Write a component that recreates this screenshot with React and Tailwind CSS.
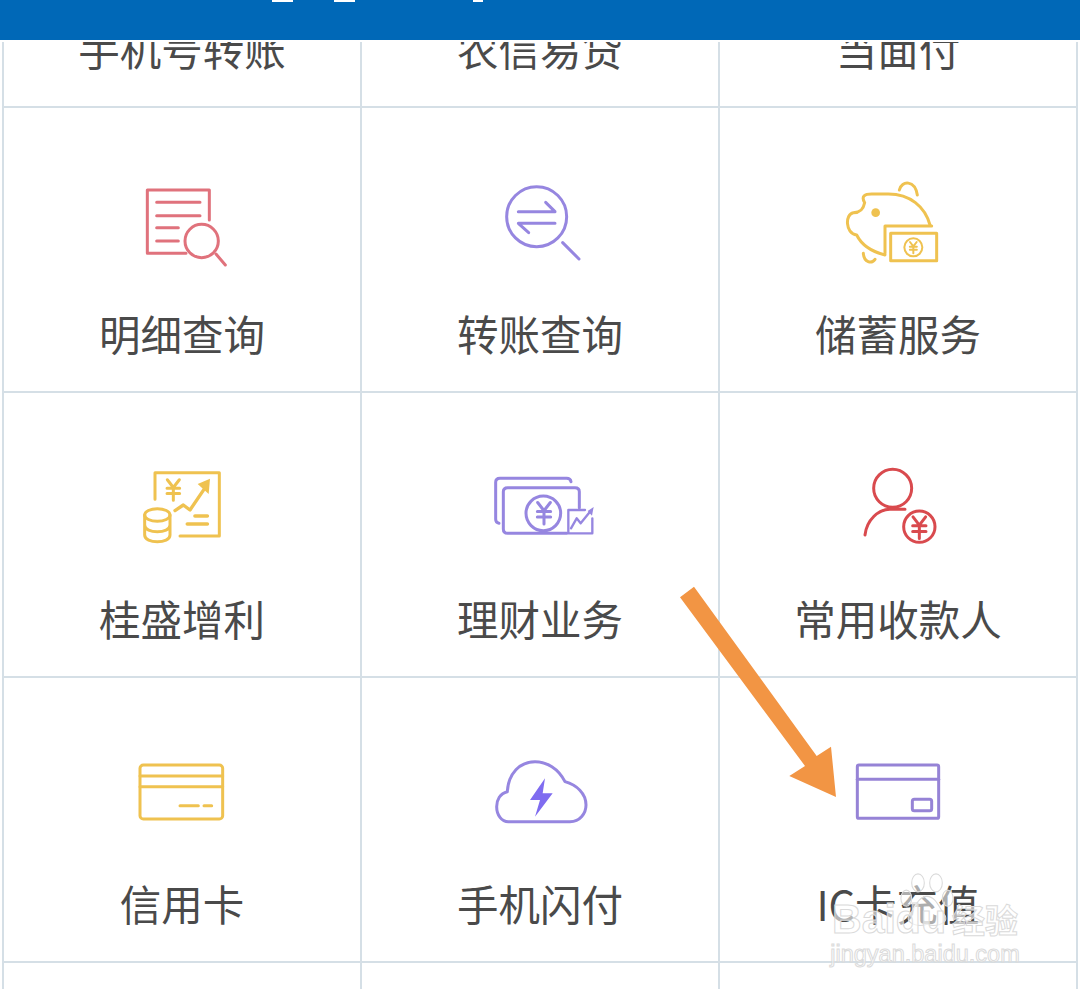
import React from 'react';

const Icon = ({ box, children }) => (
  <svg
    viewBox={box}
    fill="none"
    strokeLinecap="round"
    strokeLinejoin="round"
    className="w-[130px] h-[110px] shrink-0"
  >
    {children}
  </svg>
);

const Yen = ({ x, y, s = 1, w = 5 }) => (
  <g transform={`translate(${x} ${y}) scale(${s})`} strokeWidth={w / s}>
    <path d="M-20 -32 L0 -6 L20 -32 M-21 -4 H21 M-21 14 H21 M0 -6 V36" />
  </g>
);

const DetailIcon = () => (
  <Icon box="-9 0 390 330">
    <g stroke="#e0727c" strokeWidth="9">
      <path d="M198 250 H82 V60 H268 V150" />
      <path d="M110 97 H240 M110 137 H240 M110 173 H175 M110 213 H175" />
      <circle cx="245" cy="213" r="50" />
      <path d="M288 252 L316 285" />
    </g>
  </Icon>
);

const TransferIcon = () => (
  <Icon box="-15 0 390 330">
    <g stroke="#9686e0" strokeWidth="9">
      <circle cx="170" cy="140" r="90" />
      <path d="M115 125 H225 L197 97 M225 160 H115 L146 188" />
      <path d="M248 218 L297 267" />
    </g>
  </Icon>
);

const PigIcon = () => (
  <Icon box="9 0 390 330">
    <g stroke="#efc250" strokeWidth="9">
      <path d="M208 60 C215 30 255 30 262 75" />
      <path d="M300 165 C285 110 240 72 175 72 H125 C105 72 92 78 104 98 C100 118 92 128 70 128 C45 132 45 190 80 195 C95 225 125 245 165 255" />
      <path d="M100 250 C102 278 125 282 135 268" />
      <path d="M165 250 V168 H305" />
      <rect x="182" y="190" width="138" height="82" />
      <circle cx="250" cy="232" r="27" strokeWidth="6" />
      <Yen x={250} y={232} s={0.5} w={6} />
    </g>
    <circle cx="137" cy="128" r="13" fill="#efc250" />
  </Icon>
);

const ProfitIcon = () => (
  <Icon box="-39 -15 390 330">
    <g stroke="#efc250" strokeWidth="9">
      <path d="M75 118 V38 H268 V228 H150" />
      <Yen x={130} y={88} s={0.9} w={9} />
      <path d="M135 152 L160 135 L180 150 L222 88" strokeWidth="10" />
      <path d="M195 168 H232 M172 192 H232" strokeWidth="11" />
      <ellipse cx="82" cy="165" rx="38" ry="19" />
      <path d="M44 165 V225 C44 252 120 252 120 225 V165 M44 195 C44 222 120 222 120 195" />
    </g>
    <path d="M203 72 L240 56 L236 102 Z" fill="#efc250" />
  </Icon>
);

const WealthIcon = () => (
  <Icon box="-30 -30 390 330">
    <g stroke="#9686e0" strokeWidth="9">
      <path d="M42 175 C36 174 32 170 32 163 V52 C32 45 37 40 45 40 H245 C252 40 257 44 258 50" />
      <path d="M245 205 H68 C60 205 55 200 55 192 V80 C55 73 60 68 68 68 H270 C278 68 283 73 283 80 V128" />
      <circle cx="175" cy="145" r="52" />
      <Yen x={177} y={143} s={0.95} w={9} />
      <path d="M300 135 H250 V205 H322 V160" strokeWidth="7" />
      <path d="M258 190 L275 160 L287 175 L315 140" strokeWidth="7" />
    </g>
    <path d="M308 138 L326 126 L321 152 Z" fill="#9686e0" />
  </Icon>
);

const PayeeIcon = () => (
  <Icon box="-51 -15 390 330">
    <g stroke="#d94a4e" strokeWidth="9">
      <circle cx="128" cy="85" r="57" />
      <path d="M45 225 C50 180 85 148 120 148 H165" />
      <circle cx="208" cy="200" r="47" />
      <Yen x={208} y={201} s={0.95} w={9} />
    </g>
  </Icon>
);

const CreditIcon = () => (
  <Icon box="-9 -30 390 330">
    <g stroke="#efc250" strokeWidth="9">
      <rect x="60" y="45" width="248" height="162" rx="10" />
      <path d="M60 78 H308 M60 110 H308" />
      <path d="M180 167 H235 M252 167 H275" />
    </g>
  </Icon>
);

const CloudIcon = () => (
  <Icon box="-15 -30 390 330">
    <path
      d="M85 215 H270 C300 215 318 190 318 165 C318 130 290 105 255 95 C235 55 200 35 165 35 C120 35 85 70 82 125 C60 130 50 150 50 170 C50 195 65 215 85 215 Z"
      stroke="#9686e0"
      strokeWidth="9"
    />
    <path d="M195 85 L150 150 H180 L165 200 L218 130 H188 Z" fill="#7f6cf0" />
  </Icon>
);

const CardIcon = () => (
  <Icon box="489 510 390 330">
    <g stroke="#9683d6" strokeWidth="9">
      <rect x="562" y="585" width="244" height="160" rx="5" />
      <path d="M562 628 H806" />
      <rect x="727" y="688" width="58" height="34" rx="6" />
    </g>
  </Icon>
);

const rows = [
  [
    { label: '明细查询', icon: <DetailIcon /> },
    { label: '转账查询', icon: <TransferIcon /> },
    { label: '储蓄服务', icon: <PigIcon /> },
  ],
  [
    { label: '桂盛增利', icon: <ProfitIcon /> },
    { label: '理财业务', icon: <WealthIcon /> },
    { label: '常用收款人', icon: <PayeeIcon /> },
  ],
  [
    { label: '信用卡', icon: <CreditIcon /> },
    { label: '手机闪付', icon: <CloudIcon /> },
    { label: 'IC卡充值', icon: <CardIcon /> },
  ],
];

const topRow = ['手机号转账', '农信易贷', '当面付'];

const App = () => {
  return (
    <div className="relative w-[1080px] h-[989px] overflow-hidden bg-white font-['Noto_Sans_CJK_SC','Noto_Sans',sans-serif] text-[#4a4a4a]">
      {/* Header, title cut off by the top of the picture */}
      <div className="relative h-10 bg-[#0068b7]">
        <div className="absolute top-0 left-[272px] w-[21px] h-[2px] bg-white" />
        <div className="absolute top-0 left-[334px] w-[21px] h-[2px] bg-white" />
        <div className="absolute top-0 left-[473px] w-[10px] h-[2px] bg-white" />
      </div>

      {/* Menu grid */}
      <div className="ml-[2px] mt-[2px] w-[1076px] grid grid-cols-3 border-l-2 border-[#d5dfe6]">
        {topRow.map((label) => (
          <div
            key={label}
            className="h-[66px] overflow-hidden border-r-2 border-b-2 border-[#d5dfe6] flex items-end justify-center pb-[37px]"
          >
            <span className="text-[41.5px] leading-[41px] font-normal whitespace-nowrap">{label}</span>
          </div>
        ))}
        {rows.flat().map((item) => (
          <div
            key={item.label}
            className="h-[285px] border-r-2 border-b-2 border-[#d5dfe6] flex flex-col items-center pt-[62px]"
          >
            {item.icon}
            <span className="mt-[33px] text-[41.5px] leading-[41px] font-normal whitespace-nowrap">{item.label}</span>
          </div>
        ))}
        <div className="h-[30px] border-r-2 border-[#d5dfe6]" />
        <div className="h-[30px] border-r-2 border-[#d5dfe6]" />
        <div className="h-[30px] border-r-2 border-[#d5dfe6]" />
      </div>

      {/* Annotation arrow drawn over the screenshot */}
      <svg viewBox="0 0 170 225" className="absolute left-[675px] top-[582px] w-[170px] h-[225px]">
        <path d="M5 15.3 L19 4.7 L141.7 174 L156 164.7 L161 215 L114.3 194 L130 184 Z" fill="#f29544" />
      </svg>

      {/* Baidu jingyan watermark */}
      <div className="absolute left-[825px] top-[873px] w-[200px] flex flex-col items-center text-white/60 [-webkit-text-stroke:1px_#dadada]">
        <svg viewBox="0 0 60 60" className="w-[54px] h-[54px] -mb-[28px] ml-[4px]" fill="rgba(255,255,255,0.55)" stroke="#dadada" strokeWidth="1.2">
          <ellipse cx="20" cy="11" rx="7" ry="10" />
          <ellipse cx="40" cy="11" rx="7" ry="10" />
          <ellipse cx="7" cy="28" rx="6" ry="9" />
          <ellipse cx="53" cy="28" rx="6" ry="9" />
          <path d="M30 26 C20 26 16 40 10 47 C5 57 22 60 30 57 C38 60 55 57 50 47 C44 40 40 26 30 26 Z" />
        </svg>
        <div className="flex items-center font-['Liberation_Sans',sans-serif] font-bold text-[41px] leading-[40px]">
          <span>Baidu</span>
          <span className="ml-[6px] font-['Noto_Sans_CJK_SC',sans-serif] text-[33px]">经验</span>
        </div>
        <span className="mt-[2px] font-['Liberation_Sans',sans-serif] text-[23.5px] leading-[26px] whitespace-nowrap">jingyan.baidu.com</span>
      </div>
    </div>
  );
};

export default App;
